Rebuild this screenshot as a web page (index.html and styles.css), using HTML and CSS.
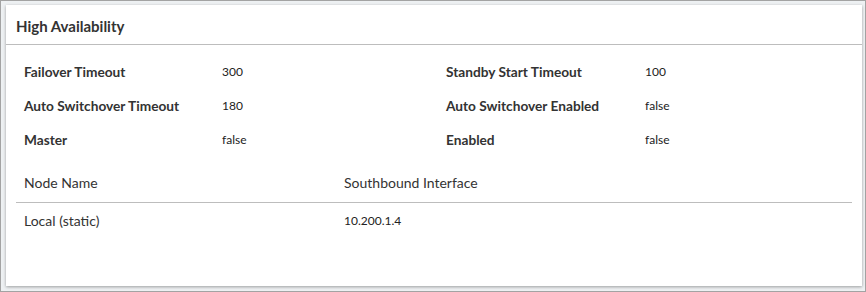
FILE: index.html
```html
<!DOCTYPE html>
<html>
<head>
<meta charset="utf-8">
<link rel="stylesheet" href="styles.css">
</head>
<body>
<div class="frame">
  <div class="card">
    <div class="card-header">High Availability</div>
    <div class="props">
      <div class="label">Failover Timeout</div><div class="value">300</div>
      <div class="label">Standby Start Timeout</div><div class="value">100</div>
      <div class="label">Auto Switchover Timeout</div><div class="value">180</div>
      <div class="label">Auto Switchover Enabled</div><div class="value">false</div>
      <div class="label">Master</div><div class="value">false</div>
      <div class="label">Enabled</div><div class="value">false</div>
    </div>
    <div class="table">
      <div class="thead">
        <div class="cell c1">Node Name</div>
        <div class="cell c2">Southbound Interface</div>
      </div>
      <div class="trow">
        <div class="cell c1">Local (static)</div>
        <div class="cell c2 small">10.200.1.4</div>
      </div>
    </div>
  </div>
</div>
</body>
</html>
```
FILE: styles.css
```css
* { box-sizing: border-box; }
html, body { margin: 0; padding: 0; }
body {
  width: 866px;
  height: 292px;
  font-family: Lato, "Liberation Sans", sans-serif;
  color: #333;
  background: #fff;
}
.frame {
  width: 866px;
  height: 292px;
  border: 1px solid #a3a3a3;
  background: #eef1f3;
  padding: 4px 3px 5px 5px;
}
.card {
  height: 281px;
  background: #fff;
  box-shadow: 0 1px 3px rgba(0,0,0,0.35);
}
.card-header {
  height: 40px;
  border-bottom: 1px solid #bdbdbd;
  padding: 0 10px;
  font-size: 15px;
  font-weight: 700;
  line-height: 42px;
  color: #333;
}
.props {
  display: grid;
  grid-template-columns: 198px 224px 199px 1fr;
  grid-auto-rows: 34px;
  padding: 9px 18px 0;
  align-items: center;
}
.label {
  font-size: 13.7px;
  font-weight: 700;
  color: #333;
}
.value {
  font-size: 12px;
  color: #222;
}
.table {
  margin: 8px 10px 0;
}
.thead, .trow {
  display: grid;
  grid-template-columns: 320px 1fr;
  align-items: center;
}
.thead {
  height: 39px;
  padding-bottom: 1px;
  border-bottom: 1px solid #bdbdbd;
}
.trow {
  height: 34px;
}
.cell {
  padding-left: 8px;
  font-size: 14px;
  color: #333;
}
.cell.small {
  font-size: 12px;
  color: #222;
}
```
